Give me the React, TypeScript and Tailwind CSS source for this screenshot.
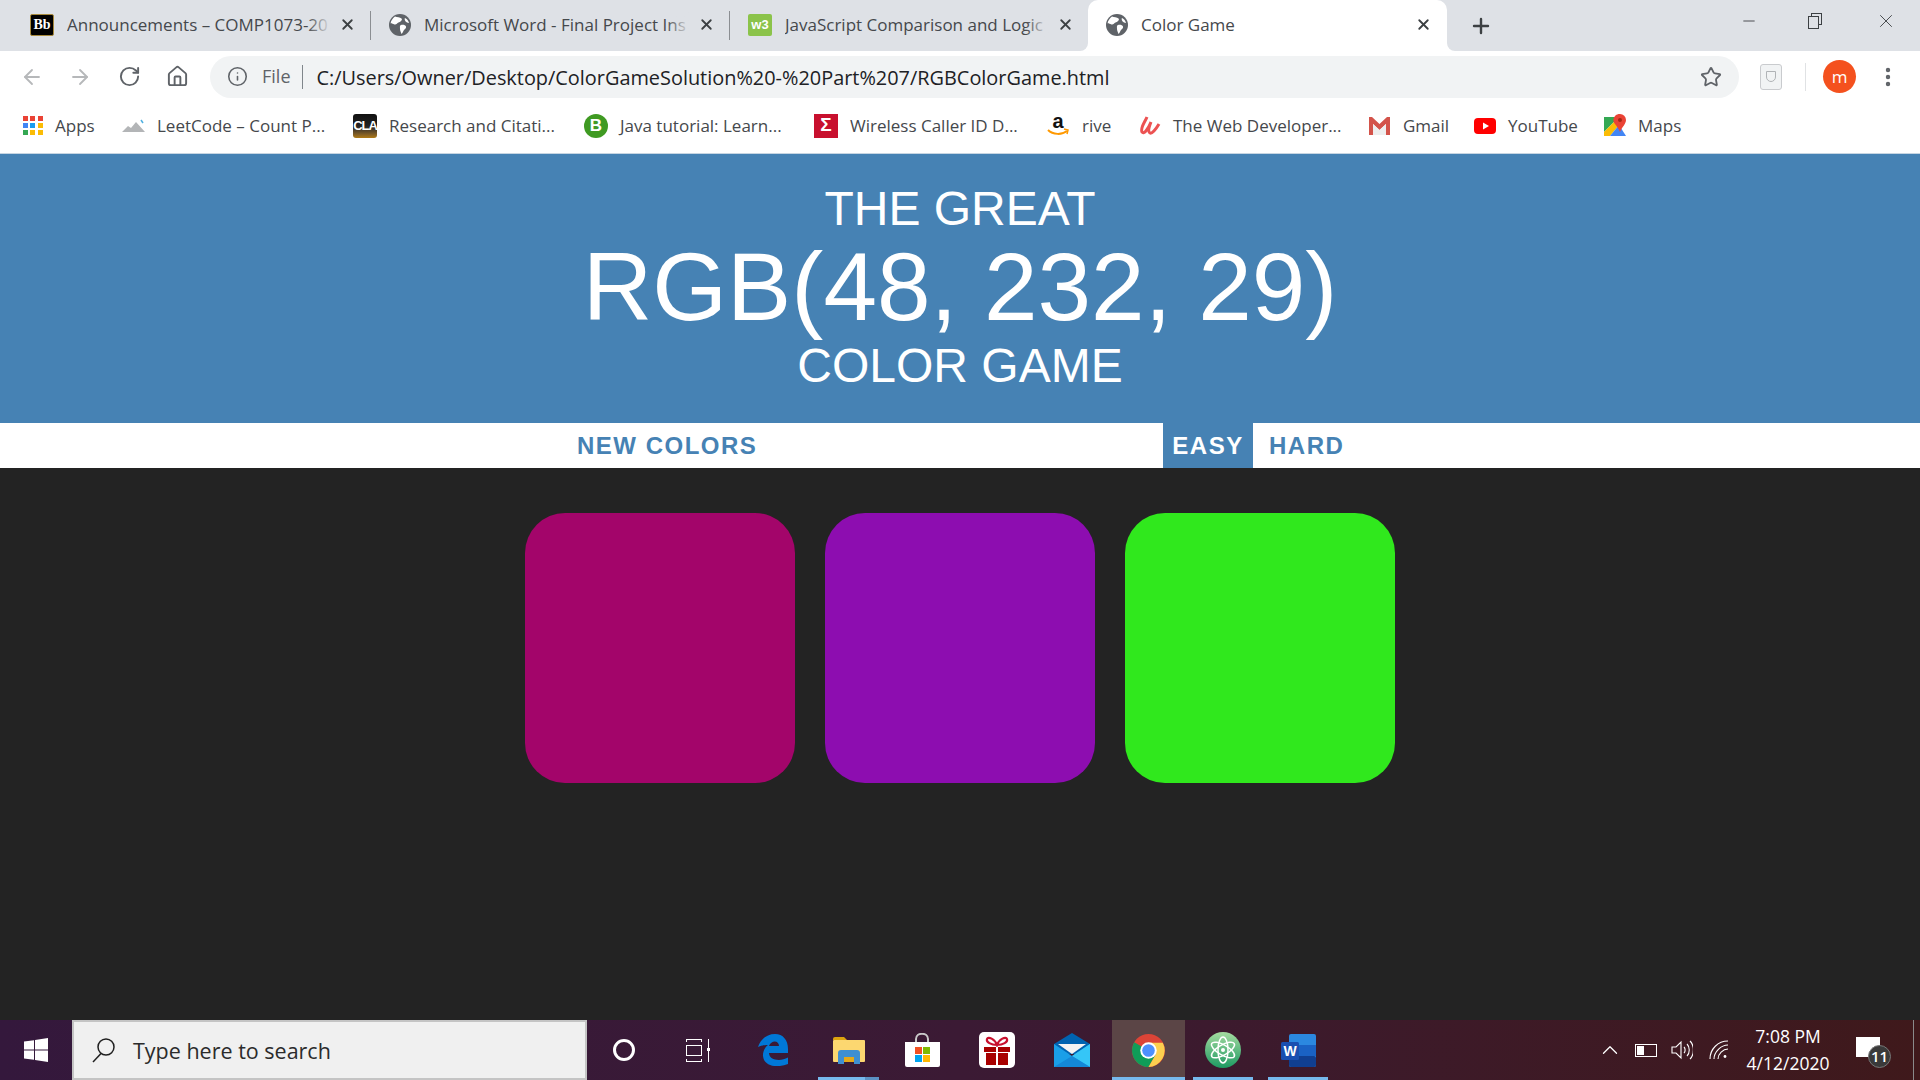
import { ArrowLeft, ArrowRight, ChevronUp, Home, Info, Minus, MoreVertical, Plus, RotateCw, Star, X } from "lucide-react";
import type { ReactNode } from "react";

function Globe({ size = 22 }: { size?: number }) {
  return (
    <svg width={size} height={size} viewBox="0 0 22 22" className="shrink-0">
      <circle cx="11" cy="11" r="11" fill="#5f6368" />
      <path d="M6 2.500c2 1 5 .5 6.500 2s-1.500 3.500-3 4-2 2.500-4 2-3-1.500-4-1C2 6.500 4 4 6 2.500z" fill="#fff" />
      <path d="M12 11c2-.5 4.500 0 5 1.500s-1 2.500-2 3.500-1 3-2.500 4c-.5-2-1.500-3-1.500-5s-.5-3.500 1-4z" fill="#fff" />
      <path d="M16 4c1.500.5 3.500 2.500 4 5-1.500 0-3.500-1-4-2.500S15.500 5 16 4z" fill="#fff" />
    </svg>
  );
}

function BbIcon() {
  return (
    <div className="flex h-[22px] w-[24px] shrink-0 items-center justify-center rounded-[2px] border border-[#a88a3c] bg-black font-['Liberation_Serif',serif] text-[14px] font-bold leading-none text-white">
      Bb
    </div>
  );
}

function W3Icon() {
  return (
    <div className="flex h-[22px] w-[24px] shrink-0 items-center justify-center rounded-[2px] bg-[#8bc34a] font-['Liberation_Sans',sans-serif] text-[13px] font-bold leading-none text-white">
      w3
    </div>
  );
}

function Tab({ icon, title, active, fade }: { icon: ReactNode; title: string; active?: boolean; fade?: boolean }) {
  return (
    <div
      className={
        active
          ? "relative flex h-[51px] w-[359px] items-center rounded-t-[10px] bg-white pb-[2px] pl-[18px] pr-[15px]"
          : "flex h-[51px] w-[358px] items-center pb-[2px] pl-[18px] pr-[14px]"
      }
    >
      {active && (
        <>
          <div className="absolute -left-[8px] bottom-0 h-[8px] w-[8px] bg-white">
            <div className="h-full w-full rounded-br-[8px] bg-[#dee1e6]" />
          </div>
          <div className="absolute -right-[8px] bottom-0 h-[8px] w-[8px] bg-white">
            <div className="h-full w-full rounded-bl-[8px] bg-[#dee1e6]" />
          </div>
        </>
      )}
      {icon}
      <div className="relative ml-[13px] flex-1 overflow-hidden whitespace-nowrap text-[17px] text-[#45484c]">
        {title}
        {fade && <div className="absolute inset-y-0 right-0 w-[24px] bg-gradient-to-r from-transparent to-[#dee1e6]" />}
      </div>
      <X size={17} strokeWidth={2.6} className="ml-[8px] shrink-0 text-[#3c4043]" />
    </div>
  );
}

function Sep() {
  return <div className="h-[29px] w-px shrink-0 bg-[#8b8e92]" />;
}

function AppsIcon() {
  const colors = ["#ea4335", "#ea4335", "#ea4335", "#4285f4", "#1a9cf0", "#fbbc05", "#34a853", "#fbbc05", "#fbbc05"];
  return (
    <div className="grid h-[20px] w-[20px] shrink-0 grid-cols-3 gap-[2px]">
      {colors.map((c, i) => (
        <div key={i} className="h-[5px] w-[5px]" style={{ backgroundColor: c }} />
      ))}
    </div>
  );
}

function Mountain() {
  return (
    <svg width="23" height="14" viewBox="0 0 23 14" className="shrink-0">
      <path d="M0 13l6-6 3 2 5-6 9 10z" fill="#b3b5b7" />
      <path d="M19 1l2 3" stroke="#4fb0e0" strokeWidth="1.500" />
    </svg>
  );
}

function Cla() {
  return (
    <div className="flex h-[24px] w-[24px] shrink-0 items-center justify-center rounded-[3px] bg-gradient-to-b from-[#111] via-[#222] to-[#b07a10] font-['Liberation_Sans',sans-serif] text-[13px] font-bold tracking-[-1px] text-white">
      CLA
    </div>
  );
}

function BCircle() {
  return (
    <div className="flex h-[24px] w-[24px] shrink-0 items-center justify-center rounded-full bg-[#3f9a22] font-['Liberation_Sans',sans-serif] text-[17px] font-bold text-white">
      B
    </div>
  );
}

function Sigma() {
  return (
    <div className="flex h-[24px] w-[24px] shrink-0 items-center justify-center bg-[#c8102e] font-['Liberation_Sans',sans-serif] text-[19px] font-bold text-white">
      Σ
    </div>
  );
}

function Amazon() {
  return (
    <svg width="24" height="24" viewBox="0 0 24 24" className="shrink-0">
      <text x="12" y="14" textAnchor="middle" fontFamily="Liberation Sans" fontWeight="700" fontSize="20" fill="#111">
        a
      </text>
      <path d="M2 16c5 5 14 5 19 1" fill="none" stroke="#f90" strokeWidth="2" />
      <path d="M18 15l4 1-1 4" fill="none" stroke="#f90" strokeWidth="1.500" />
    </svg>
  );
}

function Udemy() {
  return (
    <svg width="22" height="20" viewBox="0 0 22 20" className="shrink-0">
      <path d="M8 1C6 6 1 12 3 16c2 3 6-3 9-10-2 5-3 10-1 11s6-4 9-9" fill="none" stroke="#ec5252" strokeWidth="3" />
    </svg>
  );
}

function Gmail() {
  return (
    <svg width="23" height="18" viewBox="0 0 23 18" className="shrink-0">
      <path d="M1 0h3l7.500 7L19 0h3v18h-4V7l-6.500 6L5 7v11H1z" fill="#d3534a" />
      <path d="M5 7l6.500 6L18 7v11H5z" fill="#eeeeee" />
    </svg>
  );
}

function YouTube() {
  return (
    <svg width="22" height="16" viewBox="0 0 22 16" className="shrink-0">
      <rect width="22" height="16" rx="4" fill="#f00" />
      <path d="M9 4.500v7l6-3.500z" fill="#fff" />
    </svg>
  );
}

function Maps() {
  return (
    <svg width="22" height="24" viewBox="0 0 22 24" className="shrink-0">
      <path d="M0 3h15l-15 15z" fill="#34a853" />
      <path d="M0 18L15 3v8L6 22H0z" fill="#fbbc05" />
      <path d="M6 22l9-11 7 11z" fill="#4285f4" />
      <path d="M16 0a6 6 0 0 1 6 6c0 4-4 7-6 12-1-3-3-5-5-8a6 6 0 0 1 5-10z" fill="#ea4335" />
      <circle cx="16" cy="6" r="2" fill="#a52714" />
    </svg>
  );
}

function Bookmark({ icon, label, className }: { icon: ReactNode; label: string; className: string }) {
  return (
    <div className={`flex items-center ${className}`}>
      {icon}
      <span className="ml-[12px] whitespace-nowrap text-[17px] text-[#45484c]">{label}</span>
    </div>
  );
}

function WindowsLogo() {
  return (
    <svg width="24" height="24" viewBox="0 0 24 24" fill="#fff">
      <path d="M0 3.500l10-1.300v9.300H0zM11 2l13-2v11.500H11zM0 12.500h10v9.300L0 20.500zM11 12.500h13V24l-13-2z" />
    </svg>
  );
}

function Magnifier() {
  return (
    <svg width="23" height="25" viewBox="0 0 23 25" fill="none" stroke="#1f1f1f" strokeWidth="1.500" className="shrink-0">
      <circle cx="14" cy="9" r="8" />
      <path d="M9 15.500L1 24" />
    </svg>
  );
}

function Edge() {
  return (
    <svg width="30" height="32" viewBox="0 0 30 32">
      <path
        fillRule="evenodd"
        d="M0 13C3 4 10 0 17 0c8 0 13 6 13 15v4H11c0 7 11 9 19 4.500V30C20 34 6 33 5 22c-.4-4 2-9 5-11-5 0-8 1-10 2zm11-1h10c0-6-8-6-10 0z"
        fill="#0078d7"
      />
    </svg>
  );
}

function Explorer() {
  return (
    <svg width="32" height="27" viewBox="0 0 32 27">
      <path d="M0 2a2 2 0 0 1 2-2h9l3 3H0z" fill="#dda30f" />
      <rect y="3" width="32" height="22" rx="1" fill="#fcd770" />
      <path d="M5 27V16a3 3 0 0 1 3-3h16a3 3 0 0 1 3 3v11h-6v-7H11v7z" fill="#3f8fd2" />
      <rect x="11" y="20" width="10" height="5" fill="#e5a91b" />
    </svg>
  );
}

function StoreIcon() {
  return (
    <svg width="35" height="34" viewBox="0 0 35 34">
      <path d="M11 10V6c0-7 12-7 12 0v4" fill="none" stroke="#c9c9c9" strokeWidth="2" />
      <path d="M0 9h35v23a2 2 0 0 1-2 2H2a2 2 0 0 1-2-2z" fill="#fff" />
      <rect x="10" y="14" width="7" height="7" fill="#f25022" />
      <rect x="18" y="14" width="7" height="7" fill="#7fba00" />
      <rect x="10" y="22" width="7" height="7" fill="#00a4ef" />
      <rect x="18" y="22" width="7" height="7" fill="#ffb900" />
    </svg>
  );
}

function Gift() {
  return (
    <svg width="36" height="36" viewBox="0 0 36 36">
      <rect width="36" height="36" rx="5" fill="#fff" />
      <path d="M18 13c-2-6-9-9-10-6s4 6 10 6c6 0 11-3 10-6s-8 0-10 6z" fill="none" stroke="#c8102e" strokeWidth="2.200" />
      <rect x="5" y="15" width="26" height="5" fill="#a80000" />
      <rect x="7" y="21" width="22" height="12" fill="#a80000" />
      <rect x="17" y="15" width="2" height="18" fill="#fff" />
    </svg>
  );
}

function Mail() {
  return (
    <svg width="36" height="34" viewBox="0 0 36 34">
      <path d="M0 11L18 0l18 11v10H0z" fill="#0063b1" />
      <path d="M4 11h28L18 21z" fill="#f4f4f4" />
      <path d="M0 11l18 12 18-12v23H0z" fill="#1a9fe8" />
      <path d="M36 11v23L18 23z" fill="#35c6f7" />
      <path d="M0 34l18-11 18 11z" fill="#1488d8" />
    </svg>
  );
}

function Chrome() {
  return (
    <svg width="33" height="33" viewBox="0 0 34 34">
      <circle cx="17" cy="17" r="17" fill="#db4437" />
      <path d="M17 17L2.300 8.500A17 17 0 0 0 17 34l8.500-14.700z" fill="#0f9d58" />
      <path d="M17 9h14.700A17 17 0 0 1 17 34l8-14z" fill="#fcd04f" />
      <circle cx="17" cy="17" r="8.500" fill="#fff" />
      <circle cx="17" cy="17" r="6.500" fill="#4d90fe" />
    </svg>
  );
}

function Atom() {
  return (
    <svg width="36" height="36" viewBox="0 0 36 36">
      <defs>
        <linearGradient id="atomBg" x1="0" y1="0" x2="0" y2="1">
          <stop offset="0" stopColor="#a5dba0" />
          <stop offset="1" stopColor="#1d9a62" />
        </linearGradient>
      </defs>
      <circle cx="18" cy="18" r="18" fill="url(#atomBg)" />
      <g fill="none" stroke="#fff" strokeWidth="1.500">
        <ellipse cx="18" cy="18" rx="5" ry="13" />
        <ellipse cx="18" cy="18" rx="5" ry="13" transform="rotate(60 18 18)" />
        <ellipse cx="18" cy="18" rx="5" ry="13" transform="rotate(-60 18 18)" />
      </g>
      <circle cx="18" cy="18" r="2" fill="#fff" />
    </svg>
  );
}

function Word() {
  return (
    <svg width="35" height="33" viewBox="0 0 35 33">
      <rect x="8" width="27" height="33" rx="2" fill="#2b88e0" />
      <rect x="8" y="11" width="27" height="11" fill="#1a62c4" />
      <rect x="8" y="22" width="27" height="11" rx="2" fill="#103f91" />
      <rect y="8" width="18" height="18" rx="1.500" fill="#1a4fb0" />
      <text x="9" y="22" textAnchor="middle" fontFamily="Liberation Sans" fontWeight="700" fontSize="14" fill="#fff">
        W
      </text>
    </svg>
  );
}

function TaskView() {
  return (
    <div className="flex items-center">
      <div className="flex h-[23px] w-[16px] flex-col justify-between">
        <div className="h-[3px] border-x border-t border-white" />
        <div className="h-[11px] border border-white" />
        <div className="h-[3px] border-x border-b border-white" />
      </div>
      <div className="relative ml-[6px] h-[23px] w-px bg-white">
        <div className="absolute -left-[1px] top-[9px] h-[3px] w-[3px] bg-white" />
      </div>
    </div>
  );
}

function TaskIcon({ children, className }: { children: ReactNode; className: string }) {
  return <div className={`relative flex h-full items-center justify-center ${className}`}>{children}</div>;
}

export default function App() {
  return (
    <div className="flex h-[1080px] w-[1920px] flex-col overflow-hidden bg-white font-['Open_Sans',sans-serif]">
      {/* tab strip */}
      <div className="flex h-[51px] shrink-0 items-center bg-[#dee1e6] pl-[12px]">
        <Tab icon={<BbIcon />} title="Announcements – COMP1073-20" fade />
        <Sep />
        <Tab icon={<Globe />} title="Microsoft Word - Final Project Ins" fade />
        <Sep />
        <Tab icon={<W3Icon />} title="JavaScript Comparison and Logic" fade />
        <Tab icon={<Globe />} title="Color Game" active />
        <Plus size={24} strokeWidth={2.4} className="ml-[22px] text-[#3c4043]" />
        <div className="ml-auto flex items-center pb-[9px] pr-[23px] text-[#3c4043]">
          <Minus size={18} strokeWidth={1.2} />
          <div className="relative ml-[50px] h-[16px] w-[14px]">
            <div className="absolute right-0 top-0 h-[12px] w-[11px] border border-[#3c4043]" />
            <div className="absolute bottom-0 left-0 h-[13px] w-[11px] border border-[#3c4043] bg-[#dee1e6]" />
          </div>
          <X size={22} strokeWidth={1} className="ml-[53px]" />
        </div>
      </div>

      {/* toolbar */}
      <div className="flex h-[51px] shrink-0 items-center bg-white pl-[20px]">
        <ArrowLeft size={24} strokeWidth={1.8} className="text-[#b6b8ba]" />
        <ArrowRight size={24} strokeWidth={1.8} className="ml-[24px] text-[#b6b8ba]" />
        <RotateCw size={23} strokeWidth={2} className="ml-[26px] text-[#5f6368]" />
        <Home size={23} strokeWidth={2} className="ml-[25px] text-[#5f6368]" />
        <div className="ml-[21px] flex h-[42px] w-[1529px] items-center rounded-full bg-[#f1f3f4] pl-[17px] pr-[17px]">
          <Info size={21} strokeWidth={1.8} className="text-[#5f6368]" />
          <span className="ml-[14px] text-[18px] text-[#5f6368]">File</span>
          <div className="ml-[11px] h-[24px] w-px bg-[#80868b]" />
          <span className="ml-[14px] mt-[3px] whitespace-nowrap text-[19.900px] leading-[26px] text-[#202124]">
            C:/Users/Owner/Desktop/ColorGameSolution%20-%20Part%207/RGBColorGame.html
          </span>
          <Star size={22} strokeWidth={2} className="ml-auto text-[#5f6368]" />
        </div>
        <div className="ml-[21px] flex h-[26px] w-[22px] items-center justify-center rounded-[3px] border border-[#c9cbce] bg-[#f1f3f4]">
          <div className="h-[11px] w-[10px] rounded-b-[5px] border border-[#b0b3b6]" />
        </div>
        <div className="ml-[23px] h-[28px] w-px bg-[#e0e2e4]" />
        <div className="ml-[17px] flex h-[33px] w-[33px] items-center justify-center rounded-full bg-[#f4511e] text-[17px] text-white">m</div>
        <MoreVertical size={24} strokeWidth={2.4} className="ml-[20px] text-[#5f6368]" />
      </div>

      {/* bookmarks */}
      <div className="flex h-[52px] shrink-0 items-center border-b border-[#c6d5e2] bg-white pb-[4px] pl-[23px]">
        <Bookmark icon={<AppsIcon />} label="Apps" className="w-[99px]" />
        <Bookmark icon={<Mountain />} label="LeetCode – Count P..." className="w-[231px]" />
        <Bookmark icon={<Cla />} label="Research and Citati..." className="w-[231px]" />
        <Bookmark icon={<BCircle />} label="Java tutorial: Learn..." className="w-[230px]" />
        <Bookmark icon={<Sigma />} label="Wireless Caller ID D..." className="w-[232px]" />
        <Bookmark icon={<Amazon />} label="rive" className="w-[93px]" />
        <Bookmark icon={<Udemy />} label="The Web Developer..." className="w-[229px]" />
        <Bookmark icon={<Gmail />} label="Gmail" className="w-[106px]" />
        <Bookmark icon={<YouTube />} label="YouTube" className="w-[130px]" />
        <Bookmark icon={<Maps />} label="Maps" className="w-[90px]" />
      </div>

      {/* game header */}
      <header className="flex h-[269px] shrink-0 flex-col items-center bg-[#4682b4] pt-[28px] font-['Liberation_Sans',sans-serif] text-white">
        <div className="text-[48px] leading-[54px]">THE GREAT</div>
        <div className="text-[96.300px] leading-[102px]">RGB(48, 232, 29)</div>
        <div className="text-[48px] leading-[56px]">COLOR GAME</div>
      </header>

      {/* controls */}
      <div className="flex h-[45px] shrink-0 items-center bg-white pl-[577px] font-['Liberation_Sans',sans-serif] text-[24px] font-bold tracking-[1.500px] text-[#4682b4]">
        <span className="w-[586px]">NEW COLORS</span>
        <span className="flex h-full w-[90px] items-center justify-center bg-[#4682b4] text-white">EASY</span>
        <span className="ml-[16px]">HARD</span>
      </div>

      {/* squares */}
      <main className="flex flex-1 justify-center gap-[30px] bg-[#232323] pt-[45px]">
        <div className="h-[270px] w-[270px] rounded-[40px] bg-[#a3056a]" />
        <div className="h-[270px] w-[270px] rounded-[40px] bg-[#8d0db0]" />
        <div className="h-[270px] w-[270px] rounded-[40px] bg-[#30e81d]" />
      </main>

      {/* taskbar */}
      <div className="flex h-[60px] shrink-0 items-center bg-gradient-to-r from-[#34183c] via-[#3b1a34] to-[#3f191b] font-['Open_Sans',sans-serif]">
        <div className="flex h-full w-[72px] items-center justify-center">
          <WindowsLogo />
        </div>
        <div className="flex h-full w-[515px] items-center border-2 border-[#c4c4c4] bg-[#f0f0f0] pl-[18px]">
          <Magnifier />
          <span className="ml-[18px] mt-[2px] text-[21.500px] text-[#2b2b2b]">Type here to search</span>
        </div>
        <TaskIcon className="w-[74px]">
          <div className="h-[22px] w-[22px] rounded-full border-[3px] border-white" />
        </TaskIcon>
        <TaskIcon className="w-[72px]">
          <TaskView />
        </TaskIcon>
        <TaskIcon className="w-[80px]">
          <Edge />
        </TaskIcon>
        <TaskIcon className="ml-[5px] w-[61px]">
          <Explorer />
          <div className="absolute bottom-0 left-0 h-[3px] w-[47px] bg-[#76b9ed]" />
          <div className="absolute bottom-0 right-0 h-[3px] w-[14px] bg-[#5b92c4]" />
        </TaskIcon>
        <TaskIcon className="ml-[6px] w-[74px]">
          <StoreIcon />
        </TaskIcon>
        <TaskIcon className="w-[75px]">
          <Gift />
        </TaskIcon>
        <TaskIcon className="w-[76px]">
          <Mail />
        </TaskIcon>
        <TaskIcon className="ml-[2px] w-[73px] bg-[#5b4546]">
          <Chrome />
          <div className="absolute inset-x-0 bottom-0 h-[3px] bg-[#76b9ed]" />
        </TaskIcon>
        <TaskIcon className="ml-[8px] w-[60px]">
          <Atom />
          <div className="absolute inset-x-0 bottom-0 h-[3px] bg-[#76b9ed]" />
        </TaskIcon>
        <TaskIcon className="ml-[15px] w-[60px]">
          <Word />
          <div className="absolute inset-x-0 bottom-0 h-[3px] bg-[#76b9ed]" />
        </TaskIcon>

        {/* tray */}
        <ChevronUp size={26} strokeWidth={1.2} className="ml-[269px] text-white" />
        <div className="ml-[12px] flex h-[13px] w-[22px] items-center border border-white p-[1px]">
          <div className="h-full w-[7px] bg-white" />
        </div>
        <svg width="22" height="22" viewBox="0 0 22 22" fill="none" stroke="#fff" strokeWidth="1.100" className="ml-[14px]">
          <path d="M1 8h4l5-5v16l-5-5H1z" />
          <path d="M13 8c1.500 1.500 1.500 4.500 0 6M16 5c3 3 3 9 0 12M19 2c4.500 4.500 4.500 13.500 0 18" />
        </svg>
        <svg width="20" height="20" viewBox="0 0 20 20" fill="none" stroke="#fff" strokeWidth="1.100" className="ml-[16px]">
          <path d="M1 19C1 9 9 1 19 1M5 19C5 12 12 5 19 5M9 19c0-5 5-10 10-10" />
          <circle cx="16" cy="16.500" r="1.400" fill="#fff" stroke="none" />
        </svg>
        <div className="ml-[14px] flex w-[90px] flex-col items-center text-[17.500px] leading-[27px] text-white">
          <span className="whitespace-nowrap">7:08 PM</span>
          <span className="whitespace-nowrap">4/12/2020</span>
        </div>
        <div className="relative ml-[23px] h-[26px] w-[36px]">
          <div className="h-[20px] w-[24px] bg-white" />
          <div className="absolute left-[12px] top-[8px] flex h-[23px] w-[23px] items-center justify-center rounded-full border border-[#777] bg-[#3a3a3a] text-[15px] font-semibold text-white">
            11
          </div>
        </div>
        <div className="ml-auto mr-[6px] h-full w-px bg-[#8a8a8a]" />
      </div>
    </div>
  );
}
